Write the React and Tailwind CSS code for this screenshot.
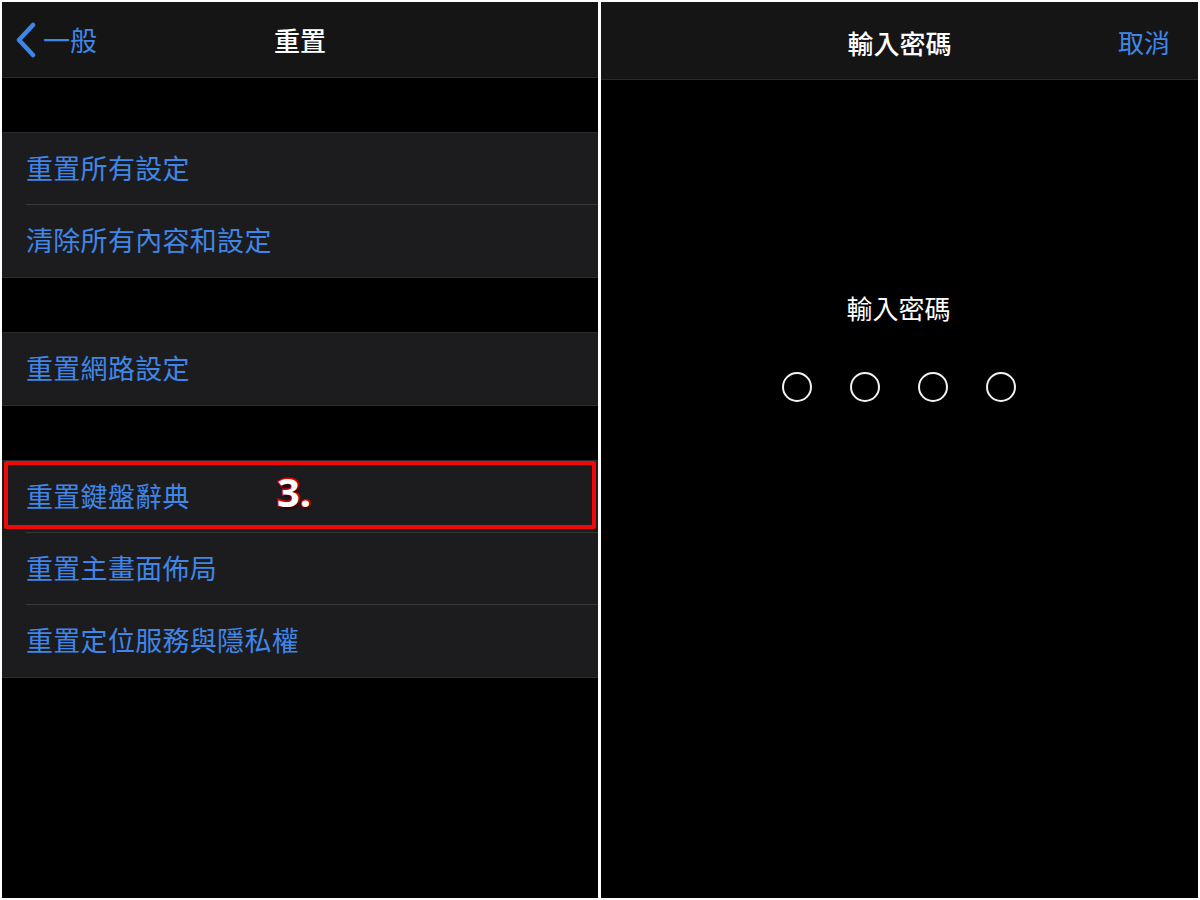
import React from "react";

const font = { fontFamily: '"Noto Sans CJK TC", "Noto Sans", sans-serif' };

function Row({ text, last, highlight, badge }) {
  return (
    <div className="relative h-[72px] flex items-stretch bg-[#1c1c1e]">
      <div className="flex-1 flex items-center pl-[24px] pb-[4px]">
        <span className="text-[27px] leading-none text-[#3f86e8] tracking-[0.3px]">{text}</span>
      </div>
      {!last && <div className="absolute left-[24px] right-0 bottom-0 h-px bg-[#38383a]" />}
      {highlight && (
        <div className="absolute left-[2px] right-[2px] top-0 h-[68px] border-[4px] border-[#ee0a0a] rounded-[2px]" />
      )}
      {badge && (
        <span
          className="absolute left-[275px] top-[11px] text-[40px] font-bold leading-none text-white"
          style={{
            fontFamily: '"Open Sans", sans-serif',
            WebkitTextStroke: "3px #e00000",
            paintOrder: "stroke fill",
            textShadow: "1px 2px 2px rgba(0,0,0,0.8)",
          }}
        >
          3.
        </span>
      )}
    </div>
  );
}

function Group({ children }) {
  return <div className="border-t border-b border-[#2c2c2e] flex flex-col">{children}</div>;
}

export default function App() {
  return (
    <div className="w-[1200px] h-[900px] bg-white p-[2px] flex gap-[3px]" style={font}>
      {/* Left panel */}
      <div className="w-[596px] h-[896px] bg-black flex flex-col overflow-hidden">
        <div className="h-[76px] shrink-0 bg-[#151515] border-b border-[#2a2a2a] flex items-center relative">
          <div className="flex items-center pl-[12px] gap-[5px]">
            <svg width="24" height="36" viewBox="0 0 24 36" className="mt-[1px]">
              <polyline
                points="19,3 5,18 19,33"
                fill="none"
                stroke="#3f86e8"
                strokeWidth="4.5"
                strokeLinecap="round"
                strokeLinejoin="round"
              />
            </svg>
            <span className="text-[27px] leading-none text-[#3f86e8]">一般</span>
          </div>
          <div className="absolute inset-0 flex items-center justify-center pointer-events-none">
            <span className="text-[26px] leading-none text-white font-medium">重置</span>
          </div>
        </div>
        <div className="h-[54px] shrink-0" />
        <Group>
          <Row text="重置所有設定" />
          <Row text="清除所有內容和設定" last />
        </Group>
        <div className="h-[54px] shrink-0" />
        <Group>
          <Row text="重置網路設定" last />
        </Group>
        <div className="h-[54px] shrink-0" />
        <Group>
          <Row text="重置鍵盤辭典" highlight badge />
          <Row text="重置主畫面佈局" />
          <Row text="重置定位服務與隱私權" last />
        </Group>
      </div>

      {/* Right panel */}
      <div className="w-[597px] h-[896px] bg-black flex flex-col">
        <div className="h-[78px] shrink-0 bg-[#151515] border-b border-[#2a2a2a] flex items-center relative pt-[5px]">
          <div className="absolute inset-0 pt-[5px] flex items-center justify-center">
            <span className="text-[26px] leading-none text-white font-medium">輸入密碼</span>
          </div>
          <div className="ml-auto pr-[28px] relative">
            <span className="text-[26px] leading-none text-[#3f86e8]">取消</span>
          </div>
        </div>
        <div className="flex flex-col items-center pt-[215px] pr-[2px]">
          <span className="text-[26px] leading-none text-white">輸入密碼</span>
          <div className="flex gap-[38px] mt-[51px]">
            {[0, 1, 2, 3].map((i) => (
              <div key={i} className="w-[30px] h-[30px] rounded-full border-[2px] border-[#f2f2f2]" />
            ))}
          </div>
        </div>
      </div>
    </div>
  );
}
